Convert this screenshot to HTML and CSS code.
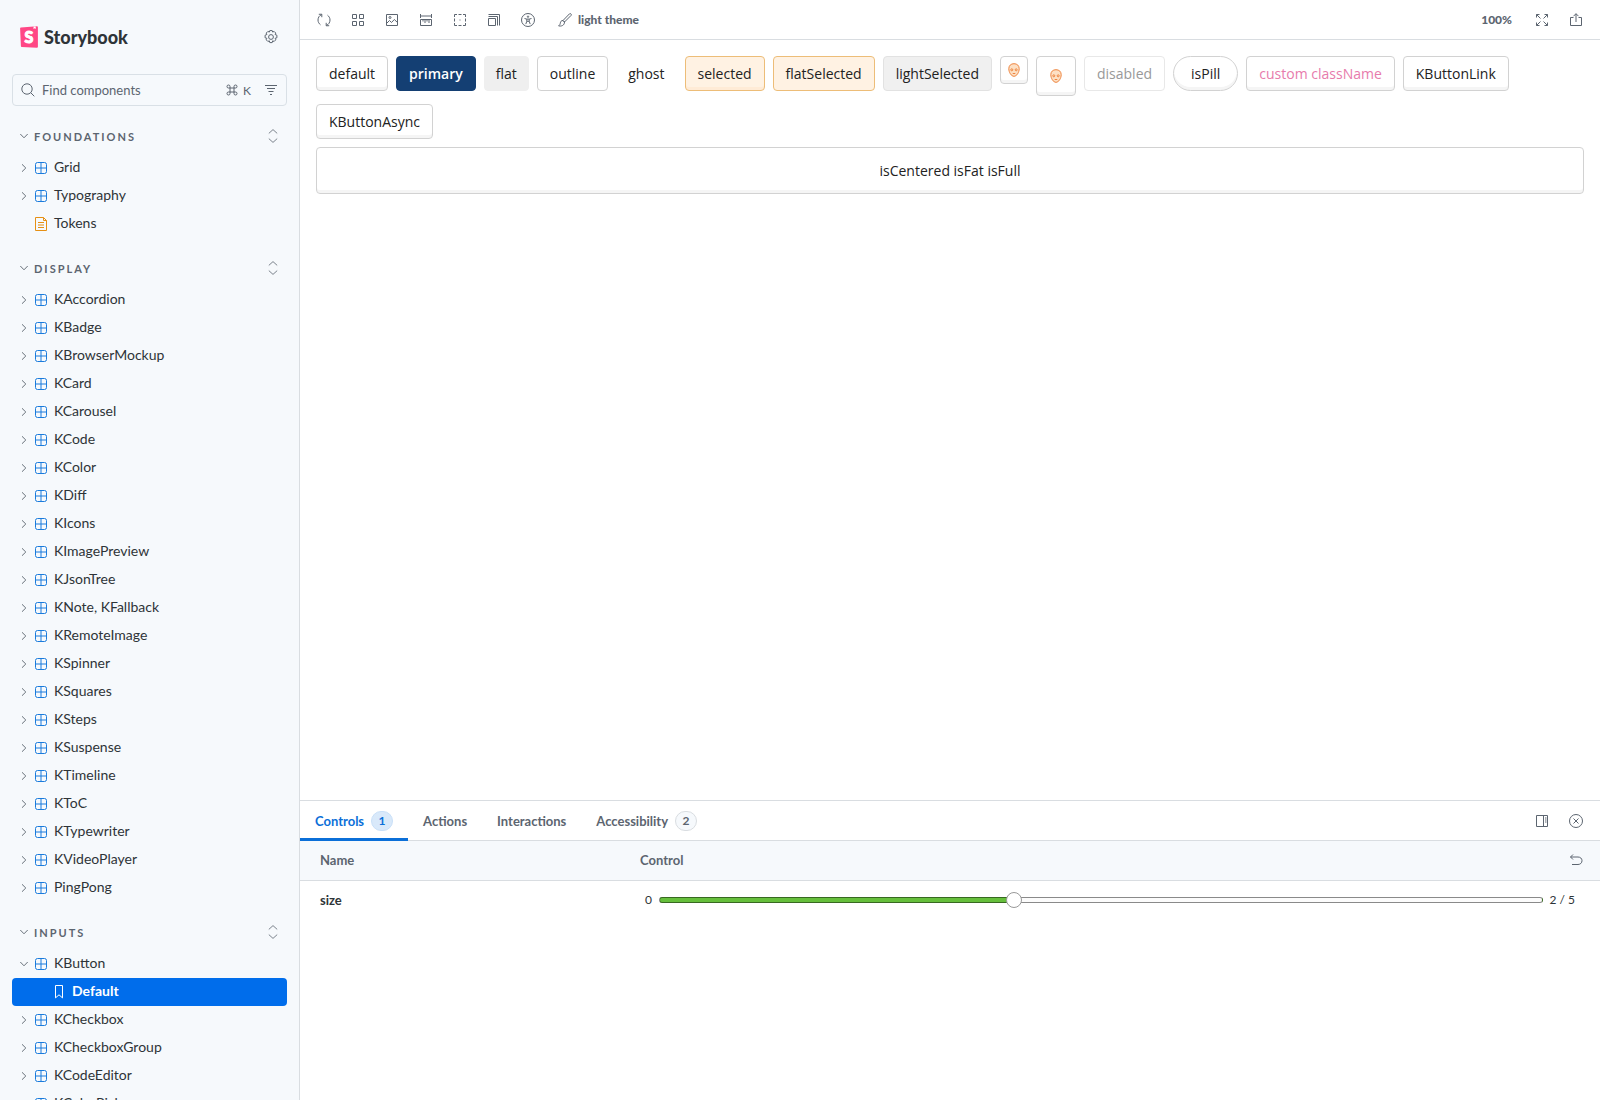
FILE: index.html
```html
<!DOCTYPE html>
<html lang="en">
<head>
    <meta charset="UTF-8">
    <meta name="viewport" content="width=device-width, initial-scale=1.0">
    <title>Inputs / KButton - Default ⋅ Storybook</title>
    <link rel="stylesheet" href="styles.css">
</head>
<body>
    <!-- Icon sprite -->
    <svg class="sprite" aria-hidden="true">
        <symbol id="chevron-right" viewBox="0 0 8 8"><path d="M2 .3 5.800 4 2 7.700"/></symbol>
        <symbol id="chevron-down" viewBox="0 0 8 8"><path d="M.3 2 4 5.800 7.700 2"/></symbol>
        <symbol id="expand-alt" viewBox="0 0 14 14"><path d="M2.800 4.400 7 .6l4.200 3.800M2.800 9.600 7 13.400l4.200-3.800"/></symbol>
        <symbol id="component" viewBox="0 0 14 14"><rect x="1.500" y="1.500" width="11" height="11" rx="2"/><path d="M7 1.500v11M1.500 7h11"/></symbol>
        <symbol id="document" viewBox="0 0 14 14"><path d="M1.500.5h8l3 3v10h-11zM9.500.5v3h3M4 5.500h6M4 8h6M4 10.500h6"/></symbol>
        <symbol id="bookmark" viewBox="0 0 14 14"><path d="M3.500.5h7v12.400L7 9.800l-3.500 3.100z"/></symbol>
    </svg>

    <div class="layout">
        <nav class="sidebar">
            <div class="sidebar-header">
                <a class="brand" href="#">
                    <svg class="brand-logo" viewBox="0 0 18 22" aria-hidden="true">
                        <path d="M.9 1.400 17 .3q.9 0 .9.9v19.600q0 1-1 1L1.800 21q-.9 0-.9-.9L.1 2.300q0-.8.8-.9z" fill="#ff4785"/>
                        <path d="M13.600.5l2.100-.1.1 2.600-1-.8-1.300.8z" fill="#fff"/>
                        <text x="9" y="17" text-anchor="middle">S</text>
                    </svg>
                    Storybook
                </a>
                <button class="icon-button" aria-label="Settings">
                    <svg class="icon" viewBox="0 0 14 14"><circle cx="7" cy="7" r="2.400"/><path d="M5.800.6h2.400l.5 1.500 1.400-.7 1.700 1.700-.7 1.400 1.800.7v2.600l-1.800.5.7 1.500-1.700 1.700-1.400-.7-.5 1.800H5.800l-.5-1.800-1.400.7-1.700-1.700.7-1.500-1.800-.5V5.200l1.800-.7-.7-1.400 1.700-1.700 1.400.7z"/></svg>
                </button>
            </div>

            <div class="search">
                <svg class="icon" viewBox="0 0 14 14" aria-hidden="true"><circle cx="6" cy="6" r="5.200"/><path d="M9.800 9.800l3.500 3.500"/></svg>
                <input type="text" aria-label="Find components" placeholder="Find components">
                <kbd class="shortcut">
                    <svg class="icon-cmd" viewBox="0 0 12 12" role="img" aria-label="Command"><path d="M4 4V2.500A1.500 1.500 0 1 0 2.500 4h7A1.500 1.500 0 1 0 8 2.500v7A1.500 1.500 0 1 0 9.500 8h-7A1.500 1.500 0 1 0 4 9.500z"/></svg>
                    K
                </kbd>
                <button class="icon-button" aria-label="Filter">
                    <svg class="icon" viewBox="0 0 14 14"><path d="M1 2.500h12M3 5.500h8M4.500 8.500h5M6 11.500h2"/></svg>
                </button>
            </div>

            <section class="group">
                <div class="group-heading">
                    <button class="group-toggle"><svg class="chevron"><use href="#chevron-down"/></svg>Foundations</button>
                    <button class="expand" aria-label="Expand all"><svg class="icon"><use href="#expand-alt"/></svg></button>
                </div>
                <button class="item"><svg class="chevron"><use href="#chevron-right"/></svg><svg class="icon type"><use href="#component"/></svg>Grid</button>
                <button class="item"><svg class="chevron"><use href="#chevron-right"/></svg><svg class="icon type"><use href="#component"/></svg>Typography</button>
                <a class="item doc" href="#"><svg class="icon type"><use href="#document"/></svg>Tokens</a>
            </section>

            <section class="group">
                <div class="group-heading">
                    <button class="group-toggle"><svg class="chevron"><use href="#chevron-down"/></svg>Display</button>
                    <button class="expand" aria-label="Expand all"><svg class="icon"><use href="#expand-alt"/></svg></button>
                </div>
                <button class="item"><svg class="chevron"><use href="#chevron-right"/></svg><svg class="icon type"><use href="#component"/></svg>KAccordion</button>
                <button class="item"><svg class="chevron"><use href="#chevron-right"/></svg><svg class="icon type"><use href="#component"/></svg>KBadge</button>
                <button class="item"><svg class="chevron"><use href="#chevron-right"/></svg><svg class="icon type"><use href="#component"/></svg>KBrowserMockup</button>
                <button class="item"><svg class="chevron"><use href="#chevron-right"/></svg><svg class="icon type"><use href="#component"/></svg>KCard</button>
                <button class="item"><svg class="chevron"><use href="#chevron-right"/></svg><svg class="icon type"><use href="#component"/></svg>KCarousel</button>
                <button class="item"><svg class="chevron"><use href="#chevron-right"/></svg><svg class="icon type"><use href="#component"/></svg>KCode</button>
                <button class="item"><svg class="chevron"><use href="#chevron-right"/></svg><svg class="icon type"><use href="#component"/></svg>KColor</button>
                <button class="item"><svg class="chevron"><use href="#chevron-right"/></svg><svg class="icon type"><use href="#component"/></svg>KDiff</button>
                <button class="item"><svg class="chevron"><use href="#chevron-right"/></svg><svg class="icon type"><use href="#component"/></svg>KIcons</button>
                <button class="item"><svg class="chevron"><use href="#chevron-right"/></svg><svg class="icon type"><use href="#component"/></svg>KImagePreview</button>
                <button class="item"><svg class="chevron"><use href="#chevron-right"/></svg><svg class="icon type"><use href="#component"/></svg>KJsonTree</button>
                <button class="item"><svg class="chevron"><use href="#chevron-right"/></svg><svg class="icon type"><use href="#component"/></svg>KNote, KFallback</button>
                <button class="item"><svg class="chevron"><use href="#chevron-right"/></svg><svg class="icon type"><use href="#component"/></svg>KRemoteImage</button>
                <button class="item"><svg class="chevron"><use href="#chevron-right"/></svg><svg class="icon type"><use href="#component"/></svg>KSpinner</button>
                <button class="item"><svg class="chevron"><use href="#chevron-right"/></svg><svg class="icon type"><use href="#component"/></svg>KSquares</button>
                <button class="item"><svg class="chevron"><use href="#chevron-right"/></svg><svg class="icon type"><use href="#component"/></svg>KSteps</button>
                <button class="item"><svg class="chevron"><use href="#chevron-right"/></svg><svg class="icon type"><use href="#component"/></svg>KSuspense</button>
                <button class="item"><svg class="chevron"><use href="#chevron-right"/></svg><svg class="icon type"><use href="#component"/></svg>KTimeline</button>
                <button class="item"><svg class="chevron"><use href="#chevron-right"/></svg><svg class="icon type"><use href="#component"/></svg>KToC</button>
                <button class="item"><svg class="chevron"><use href="#chevron-right"/></svg><svg class="icon type"><use href="#component"/></svg>KTypewriter</button>
                <button class="item"><svg class="chevron"><use href="#chevron-right"/></svg><svg class="icon type"><use href="#component"/></svg>KVideoPlayer</button>
                <button class="item"><svg class="chevron"><use href="#chevron-right"/></svg><svg class="icon type"><use href="#component"/></svg>PingPong</button>
            </section>

            <section class="group">
                <div class="group-heading">
                    <button class="group-toggle"><svg class="chevron"><use href="#chevron-down"/></svg>Inputs</button>
                    <button class="expand" aria-label="Expand all"><svg class="icon"><use href="#expand-alt"/></svg></button>
                </div>
                <button class="item"><svg class="chevron"><use href="#chevron-down"/></svg><svg class="icon type"><use href="#component"/></svg>KButton</button>
                <a class="item story active" href="#"><svg class="icon type"><use href="#bookmark"/></svg>Default</a>
                <button class="item"><svg class="chevron"><use href="#chevron-right"/></svg><svg class="icon type"><use href="#component"/></svg>KCheckbox</button>
                <button class="item"><svg class="chevron"><use href="#chevron-right"/></svg><svg class="icon type"><use href="#component"/></svg>KCheckboxGroup</button>
                <button class="item"><svg class="chevron"><use href="#chevron-right"/></svg><svg class="icon type"><use href="#component"/></svg>KCodeEditor</button>
                <button class="item"><svg class="chevron"><use href="#chevron-right"/></svg><svg class="icon type"><use href="#component"/></svg>KColorPicker</button>
            </section>
        </nav>

        <main class="main">
            <div class="toolbar">
                <button class="icon-button" aria-label="Remount component">
                    <svg class="icon" viewBox="0 0 14 14"><path d="M4.600 1.600C2.300 2.500 1 4.600 1 7c0 2 1 3.700 2.500 4.800M9.400 12.400C11.700 11.500 13 9.400 13 7c0-2-1-3.700-2.500-4.800M1.800 1.300l3-.1v3M12.200 12.700l-3 .1v-3"/></svg>
                </button>
                <button class="icon-button" aria-label="Apply a grid">
                    <svg class="icon" viewBox="0 0 14 14"><path d="M1.500 1.500h4v4h-4zM8.500 1.500h4v4h-4zM1.500 8.500h4v4h-4zM8.500 8.500h4v4h-4z"/></svg>
                </button>
                <button class="icon-button" aria-label="Change background">
                    <svg class="icon" viewBox="0 0 14 14"><path d="M1.500 1.500h11v11h-11zM1.500 10.500 4.500 7.500 6.500 9.500 9.300 6.500 12.500 9.500"/><circle cx="5" cy="4.500" r="1"/></svg>
                </button>
                <button class="icon-button" aria-label="Enable measure">
                    <svg class="icon" viewBox="0 0 14 14"><path d="M1.500 1v4M12.500 1v4M1.500 3h11M1.500 6.500h11v6h-11zM4 6.500v2M6 6.500v3.500M8 6.500v2M10 6.500v3.500"/></svg>
                </button>
                <button class="icon-button" aria-label="Apply outlines">
                    <svg class="icon" viewBox="0 0 14 14"><path d="M1.500 4V1.500H4M5.500 1.500h3M10 1.500h2.500V4M12.500 5.500v3M12.500 10v2.500H10M8.500 12.500h-3M4 12.500H1.500V10M1.500 8.500v-3M6.500 7h1"/></svg>
                </button>
                <button class="icon-button" aria-label="Viewport size">
                    <svg class="icon" viewBox="0 0 14 14"><path d="M1.500 5.500h7v7h-7zM1.500 3.500h9v9M1.500 1.500h11v11"/></svg>
                </button>
                <button class="icon-button" aria-label="Vision filter">
                    <svg class="icon" viewBox="0 0 14 14"><circle cx="7" cy="7" r="6.500"/><circle cx="7" cy="3.700" r=".7"/><path d="M3.500 5.500l2.300.6v2.200l-1 2.800M10.500 5.500l-2.300.6v2.200l1 2.800M5.800 6.100h2.400M5.800 8.300h2.400"/></svg>
                </button>
                <button class="text-button">
                    <svg class="icon" viewBox="0 0 14 14" aria-hidden="true"><path d="M5 7.500 11.500.8c1-.8 2.400.6 1.600 1.600L6.500 9zM5 7.500c-2 0-2.500 1.200-2.700 2.800-.1 1-.7 1.900-1.700 2.600 2.700.6 5.900-.4 5.900-3.900z"/></svg>
                    light theme
                </button>
                <div class="toolbar-right">
                    <button class="text-button zoom">100%</button>
                    <button class="icon-button" aria-label="Go full screen">
                        <svg class="icon" viewBox="0 0 14 14"><path d="M4.500 1.500h-3v3M1.500 1.500 5.500 5.500M9.500 1.500h3v3M12.500 1.500l-4 4M4.500 12.500h-3v-3M1.500 12.500l4-4M9.500 12.500h3v-3M12.500 12.500l-4-4"/></svg>
                    </button>
                    <button class="icon-button" aria-label="Share">
                        <svg class="icon" viewBox="0 0 14 14"><path d="M4.500 4.500h-3v8h11v-8h-3M7 9V.8M4.500 3.200 7 .7l2.500 2.500"/></svg>
                    </button>
                </div>
            </div>

            <div class="canvas">
                <button class="k-button">default</button>
                <button class="k-button primary">primary</button>
                <button class="k-button flat">flat</button>
                <button class="k-button outline">outline</button>
                <button class="k-button ghost">ghost</button>
                <button class="k-button selected">selected</button>
                <button class="k-button selected flat-selected">flatSelected</button>
                <button class="k-button light-selected">lightSelected</button>
                <button class="k-button icon-only" aria-label="Small icon">
                    <svg class="alien" viewBox="0 0 12 14"><path d="M6 .7c3.200 0 5.200 2 5.200 5 0 3.600-2.500 7.600-5.200 7.600S.8 9.300.8 5.700c0-3 2-5 5.200-5z"/><circle cx="3.800" cy="6.800" r="1"/><circle cx="8.200" cy="6.800" r="1"/><path d="M4.700 10.500h2.600"/></svg>
                </button>
                <button class="k-button icon-only large" aria-label="Large icon">
                    <svg class="alien" viewBox="0 0 12 14"><path d="M6 .7c3.200 0 5.200 2 5.200 5 0 3.600-2.500 7.600-5.200 7.600S.8 9.300.8 5.700c0-3 2-5 5.200-5z"/><circle cx="3.800" cy="6.800" r="1"/><circle cx="8.200" cy="6.800" r="1"/><path d="M4.700 10.500h2.600"/></svg>
                </button>
                <button class="k-button" disabled>disabled</button>
                <button class="k-button pill">isPill</button>
                <button class="k-button custom">custom className</button>
                <a class="k-button" href="#">KButtonLink</a>
                <button class="k-button">KButtonAsync</button>
                <button class="k-button fat full">isCentered isFat isFull</button>
            </div>

            <section class="panel">
                <div class="tabs" role="tablist">
                    <button class="tab active" role="tab" aria-selected="true">Controls <span class="badge">1</span></button>
                    <button class="tab" role="tab">Actions</button>
                    <button class="tab" role="tab">Interactions</button>
                    <button class="tab" role="tab">Accessibility <span class="badge">2</span></button>
                    <div class="tabs-right">
                        <button class="icon-button" aria-label="Change addon orientation">
                            <svg class="icon" viewBox="0 0 14 14"><path d="M1.500 1.500h11v11h-11zM8.500 1.500v11M10 4h1.500M10 6h1.500M10 8h1.500"/></svg>
                        </button>
                        <button class="icon-button" aria-label="Hide addons">
                            <svg class="icon" viewBox="0 0 14 14"><circle cx="7" cy="7" r="6.500"/><path d="M4.500 4.500l5 5M9.500 4.500l-5 5"/></svg>
                        </button>
                    </div>
                </div>
                <table class="controls">
                    <thead>
                        <tr>
                            <th class="name">Name</th>
                            <th>
                                <div class="control-head">
                                    Control
                                    <button class="icon-button" aria-label="Reset controls">
                                        <svg class="icon" viewBox="0 0 14 14"><path d="M4 1.500 1.500 4 4 6.500M1.500 4H9c2.300 0 4 1.500 4 3.700s-1.700 3.800-4 3.800H3"/></svg>
                                    </button>
                                </div>
                            </th>
                        </tr>
                    </thead>
                    <tbody>
                        <tr>
                            <td class="name"><label for="size">size</label></td>
                            <td>
                                <div class="range">
                                    <span>0</span>
                                    <input id="size" type="range" min="0" max="5" value="2" style="--value: 40%">
                                    <span>2 / 5</span>
                                </div>
                            </td>
                        </tr>
                    </tbody>
                </table>
            </section>
        </main>
    </div>
</body>
</html>
```
FILE: styles.css
```css
* {
    box-sizing: border-box;
}
body {
    margin: 0;
    font-family: Lato, "Liberation Sans", sans-serif;
    font-size: 14px;
    color: #2e3438;
    background-color: #fff;
    overflow: hidden;
}
button, input {
    font: inherit;
    color: inherit;
    margin: 0;
    padding: 0;
    border: 0;
    background: none;
}
button {
    cursor: pointer;
}
a {
    color: inherit;
    text-decoration: none;
}
.sprite {
    display: none;
}
.icon {
    width: 14px;
    height: 14px;
    flex: none;
    fill: none;
    stroke: currentColor;
    stroke-width: 1;
}
.icon-button {
    display: flex;
    align-items: center;
    justify-content: center;
    flex: none;
    width: 28px;
    height: 28px;
    color: #5c6570;
}
.layout {
    display: flex;
    height: 100vh;
}

/* Sidebar */
.sidebar {
    flex: none;
    width: 300px;
    padding: 16px 12px 0;
    overflow: hidden;
    background-color: #f6f9fc;
    border-right: 1px solid #d9dde1;
}
.sidebar-header {
    display: flex;
    align-items: center;
    justify-content: space-between;
    height: 42px;
    margin-bottom: 16px;
    padding: 0 2px 0 8px;
}
.brand {
    display: flex;
    align-items: center;
    gap: 6px;
    font-size: 18px;
    font-weight: 900;
}
.brand-logo {
    width: 18px;
    height: 22px;
}
.brand-logo text {
    font-size: 16px;
    font-weight: 900;
    fill: #fff;
    stroke: #fff;
}
.search {
    display: flex;
    align-items: center;
    height: 32px;
    margin-bottom: 16px;
    padding: 0 1px 0 8px;
    border: 1px solid #d9e0e6;
    border-radius: 4px;
    color: #5c6570;
}
.search input {
    flex: 1;
    min-width: 0;
    padding: 0 7px;
    font-size: 13px;
    outline: none;
}
.search input::placeholder {
    color: #5c6570;
    opacity: 1;
}
.shortcut {
    display: flex;
    align-items: center;
    gap: 5px;
    margin-right: 6px;
    font-family: inherit;
    font-size: 12px;
}
.icon-cmd {
    width: 12px;
    height: 12px;
    fill: none;
    stroke: currentColor;
}
.group {
    margin-bottom: 16px;
}
.group-heading {
    display: flex;
    align-items: center;
    justify-content: space-between;
    height: 28px;
    margin-bottom: 4px;
    padding: 0 7px 0 8px;
    color: #5c6570;
}
.group-toggle {
    display: flex;
    align-items: center;
    gap: 6px;
    font-size: 11px;
    font-weight: 700;
    letter-spacing: 2px;
    text-transform: uppercase;
}
.expand {
    display: flex;
    color: #7b838c;
}
.chevron {
    width: 8px;
    height: 8px;
    flex: none;
    fill: none;
    stroke: #68717a;
}
.item {
    display: flex;
    align-items: flex-start;
    width: 100%;
    height: 28px;
    padding-left: 8px;
    border-radius: 4px;
    line-height: 26px;
    text-align: left;
}
.item svg {
    align-self: center;
}
.item .type {
    margin: 0 6px;
    color: #1a7bdc;
}
.item.doc {
    padding-left: 16px;
}
.item.doc .type {
    color: #e69014;
}
.item.story {
    padding-left: 34px;
}
.item.active {
    background-color: #006deb;
    color: #fff;
    font-weight: 700;
}
.item.active .type {
    color: #fff;
}

/* Toolbar */
.main {
    display: flex;
    flex-direction: column;
    flex: 1;
    min-width: 0;
}
.toolbar {
    display: flex;
    align-items: center;
    gap: 6px;
    height: 40px;
    padding: 0 10px;
    border-bottom: 1px solid #d9dde1;
}
.text-button {
    display: flex;
    align-items: center;
    gap: 6px;
    height: 28px;
    padding: 0 10px;
    color: #5c6570;
    font-size: 12px;
    font-weight: 900;
}
.toolbar-right {
    display: flex;
    gap: 6px;
    margin-left: auto;
}

/* Story canvas */
.canvas {
    display: flex;
    flex: 1;
    flex-wrap: wrap;
    align-items: flex-start;
    align-content: flex-start;
    gap: 8px;
    padding: 16px;
    font-family: "Open Sans", "Liberation Sans", sans-serif;
}
.k-button {
    padding: 6px 12px;
    border: 1px solid #d2d2d2;
    border-radius: 4px;
    background-color: #fff;
    box-shadow: inset 0 -3px #f5f5f5;
    color: #222;
    line-height: 21px;
}
.k-button.primary {
    border-color: #143f73;
    background-color: #143f73;
    box-shadow: none;
    color: #fff;
    font-weight: 600;
}
.k-button.flat {
    padding: 6px 11px;
    border-color: #efefef;
    background-color: #efefef;
    box-shadow: none;
}
.k-button.outline {
    box-shadow: none;
}
.k-button.ghost {
    padding: 6px 11px;
    border-color: transparent;
    background: none;
    box-shadow: none;
}
.k-button.selected {
    border-color: #edbd78;
    background-color: #fff2e3;
    box-shadow: inset 0 -3px #ffebd6;
}
.k-button.flat-selected {
    box-shadow: none;
}
.k-button.light-selected {
    border-color: #e2e2e2;
    background-color: #f0f0f0;
    box-shadow: none;
}
.k-button.icon-only {
    display: flex;
    align-items: center;
    justify-content: center;
    width: 28px;
    height: 28px;
    padding: 0;
}
.k-button.icon-only.large {
    width: 40px;
    height: 40px;
}
.alien {
    width: 12px;
    height: 14px;
    fill: #fde0c4;
    stroke: #ee8540;
}
.k-button:disabled {
    border-color: #e8e8e8;
    box-shadow: none;
    color: #999;
}
.k-button.pill {
    padding: 6px 17px;
    border-radius: 18px;
}
.k-button.custom {
    color: #e77bac;
}
.k-button.fat {
    padding: 12px;
}
.k-button.full {
    width: 100%;
}

/* Addon panel */
.panel {
    flex: none;
    height: 300px;
    border-top: 1px solid #d9dde1;
}
.tabs {
    display: flex;
    height: 40px;
    padding-right: 10px;
    border-bottom: 1px solid #d9dde1;
    color: #5c6570;
    font-size: 13px;
    font-weight: 700;
}
.tab {
    display: flex;
    align-items: center;
    gap: 7px;
    height: 40px;
    padding: 0 15px;
    border-top: 3px solid transparent;
    border-bottom: 3px solid transparent;
}
.tab.active {
    border-bottom-color: #0b6fd8;
    color: #0b6fd8;
}
.badge {
    min-width: 22px;
    height: 20px;
    border: 1px solid #d9dde1;
    border-radius: 10px;
    background-color: #f6f9fc;
    font-size: 12px;
    line-height: 18px;
    text-align: center;
}
.tab.active .badge {
    border-color: #c9e0f8;
    background-color: #d9e9fa;
}
.tabs-right {
    display: flex;
    align-items: center;
    gap: 6px;
    margin-left: auto;
}
.controls {
    width: 100%;
    border-collapse: collapse;
    table-layout: fixed;
    font-size: 13px;
}
.controls th {
    height: 39px;
    padding: 0 10px 0 15px;
    border-bottom: 1px solid #d9dde1;
    background-color: #f6f9fc;
    color: #5c6570;
    text-align: left;
}
.controls td {
    height: 39px;
    padding: 0 25px 0 20px;
}
.controls .name {
    width: 25%;
    padding-left: 20px;
    font-weight: 700;
}
.control-head {
    display: flex;
    align-items: center;
    justify-content: space-between;
}
.range {
    display: flex;
    align-items: center;
    gap: 7px;
    font-size: 12px;
}
.range input {
    flex: 1;
    min-width: 0;
    height: 16px;
    appearance: none;
}
.range input::-webkit-slider-runnable-track {
    height: 6px;
    border: 1px solid rgba(0, 0, 0, 0.45);
    border-radius: 6px;
    background: linear-gradient(to right, #66bf3c var(--value), #fcfcfc var(--value));
}
.range input::-webkit-slider-thumb {
    appearance: none;
    width: 16px;
    height: 16px;
    margin-top: -6px;
    border: 1px solid #999;
    border-radius: 50%;
    background-color: #fff;
}
```
